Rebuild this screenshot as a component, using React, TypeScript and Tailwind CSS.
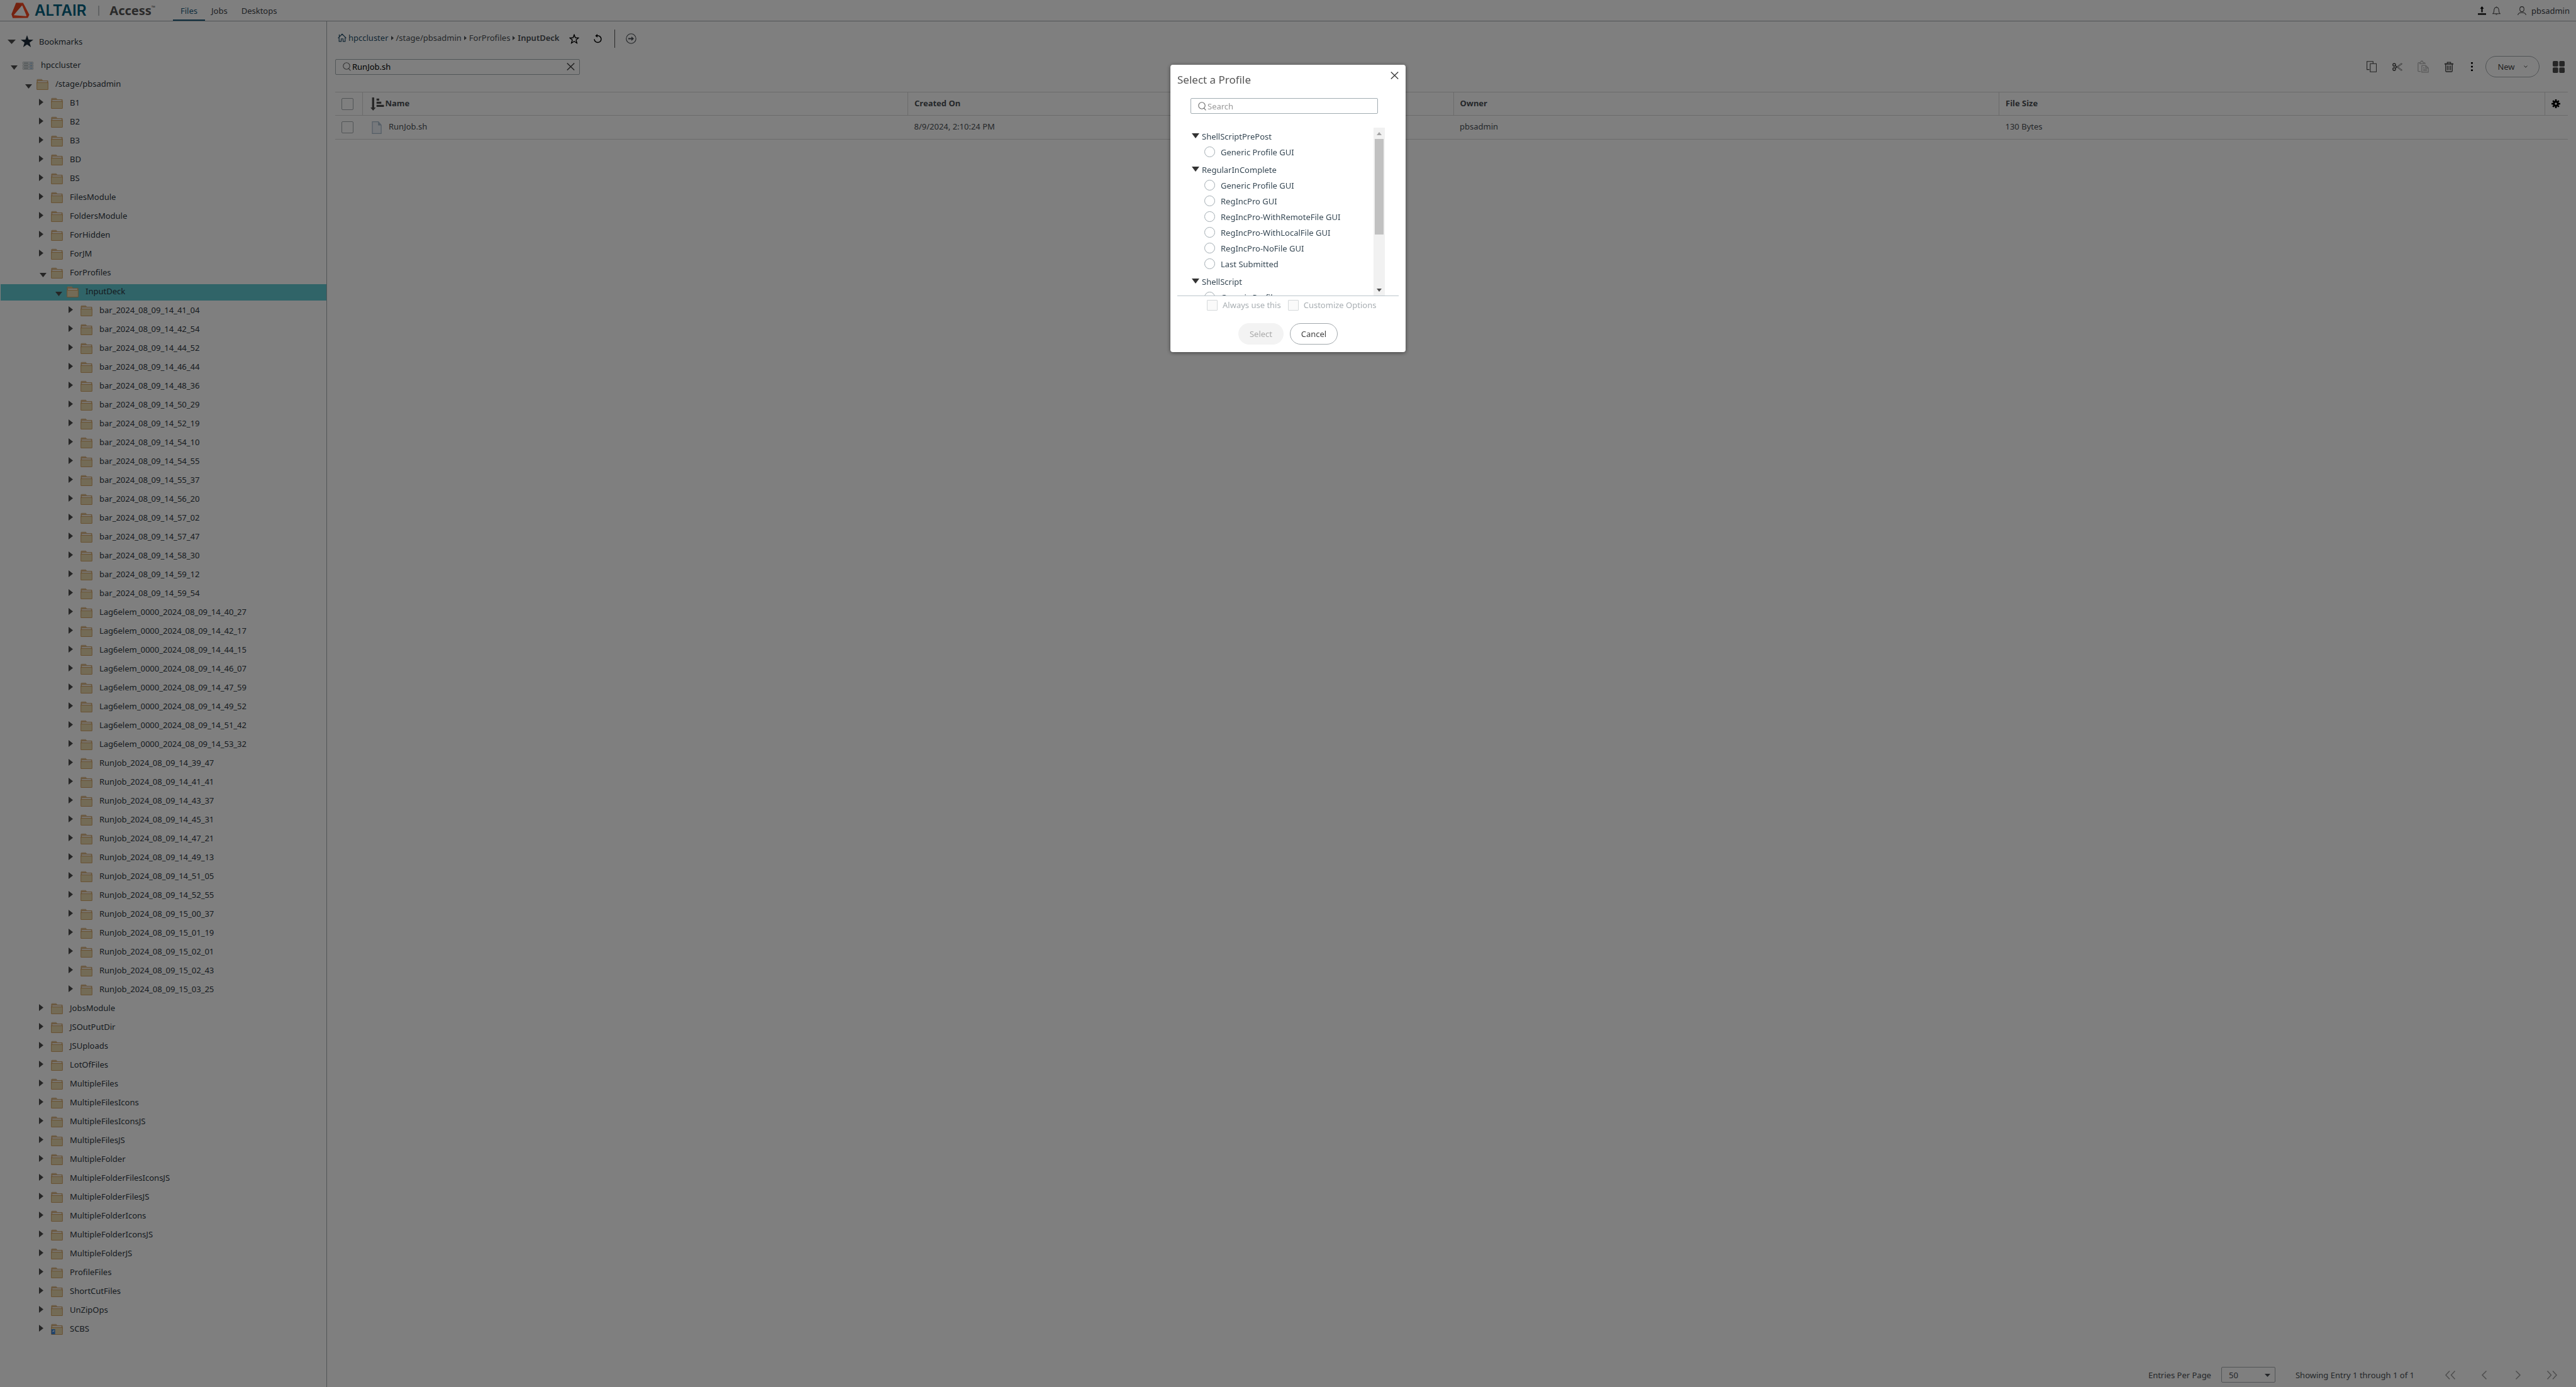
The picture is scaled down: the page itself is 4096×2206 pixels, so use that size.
import React from "react";

type Node = { name: string; level: number; open?: boolean; selected?: boolean; kind?: "server" | "link" };

const topFolders = ["B1", "B2", "B3", "BD", "BS", "FilesModule", "FoldersModule", "ForHidden", "ForJM"];

const runs: [string, string[]][] = [
  [
    "bar_2024_08_09_",
    ["14_41_04", "14_42_54", "14_44_52", "14_46_44", "14_48_36", "14_50_29", "14_52_19", "14_54_10", "14_54_55", "14_55_37", "14_56_20", "14_57_02", "14_57_47", "14_58_30", "14_59_12", "14_59_54"],
  ],
  ["Lag6elem_0000_2024_08_09_", ["14_40_27", "14_42_17", "14_44_15", "14_46_07", "14_47_59", "14_49_52", "14_51_42", "14_53_32"]],
  [
    "RunJob_2024_08_09_",
    ["14_39_47", "14_41_41", "14_43_37", "14_45_31", "14_47_21", "14_49_13", "14_51_05", "14_52_55", "15_00_37", "15_01_19", "15_02_01", "15_02_43", "15_03_25"],
  ],
];

const bottomFolders = [
  "JobsModule",
  "JSOutPutDir",
  "JSUploads",
  "LotOfFiles",
  "MultipleFiles",
  "MultipleFilesIcons",
  "MultipleFilesIconsJS",
  "MultipleFilesJS",
  "MultipleFolder",
  "MultipleFolderFilesIconsJS",
  "MultipleFolderFilesJS",
  "MultipleFolderIcons",
  "MultipleFolderIconsJS",
  "MultipleFolderJS",
  "ProfileFiles",
  "ShortCutFiles",
  "UnZipOps",
];

const tree: Node[] = [
  { name: "hpccluster", level: 0, open: true, kind: "server" },
  { name: "/stage/pbsadmin", level: 1, open: true },
  ...topFolders.map((name) => ({ name, level: 2 })),
  { name: "ForProfiles", level: 2, open: true },
  { name: "InputDeck", level: 3, open: true, selected: true },
  ...runs.flatMap(([prefix, times]) => times.map((t) => ({ name: prefix + t, level: 4 }))),
  ...bottomFolders.map((name) => ({ name, level: 2 })),
  { name: "SCBS", level: 2, kind: "link" as const },
];

const indent = ["pl-[16px]", "pl-[39px]", "pl-[62px]", "pl-[86px]", "pl-[109px]"];

const profiles: { group: string; items: string[] }[] = [
  { group: "ShellScriptPrePost", items: ["Generic Profile GUI"] },
  {
    group: "RegularInComplete",
    items: ["Generic Profile GUI", "RegIncPro GUI", "RegIncPro-WithRemoteFile GUI", "RegIncPro-WithLocalFile GUI", "RegIncPro-NoFile GUI", "Last Submitted"],
  },
  { group: "ShellScript", items: ["Generic Profile"] },
];

function FolderIcon({ link = false }: { link?: boolean }) {
  return (
    <svg className="w-[19px] h-[18px] shrink-0" viewBox="0 0 22 21" aria-hidden="true">
      <path d="M1 2h9l1.5 2H21v6H1z" fill="#d9b483" stroke="#cfa063" strokeWidth="1" />
      <path d="M1.500 .8h8.500v1.200h-8.500z" fill="#dcc7a6" />
      <path d="M2.500 4.800h17v3h-17z" fill="#f3efe8" />
      <path d="M.7 7.500h20.600V19.500q0 .9-.9.900H1.600q-.9 0-.9-.9z" fill="#e6d6ac" stroke="#d2a464" strokeWidth="1.200" />
      {link && (
        <>
          <path d="M.7 10.500h7v9.500h-7z" fill="#3f86d8" />
          <path d="M2.500 16.500q0-3 2.200-3.200V12l1.800 1.800-1.800 2v-1.200q-1.200 0-2.200 1.900z" fill="#fff" />
        </>
      )}
    </svg>
  );
}

function ServerIcon() {
  return (
    <svg className="w-[19px] h-[13px] shrink-0" viewBox="0 0 22 15" aria-hidden="true">
      {[0.7, 5.5, 10.300].map((y) => (
        <g key={y}>
          <rect x="1.500" y={y} width="19" height="4" rx=".8" fill="#f0f2f2" stroke="#b3bbbd" strokeWidth="1" />
          <path d={`M3.500 ${y + 2}h8`} stroke="#97a1a5" strokeWidth="1.300" />
          <path d={`M14.500 ${y + 2}h1.300M17.200 ${y + 2}h1.500`} stroke="#3f7fc0" strokeWidth="1.500" />
        </g>
      ))}
    </svg>
  );
}

function Down({ className = "w-[12px] h-[7px]" }: { className?: string }) {
  return (
    <svg className={className} viewBox="0 0 12 7" preserveAspectRatio="none" aria-hidden="true">
      <path d="M0 0h12L6 7z" fill="currentColor" />
    </svg>
  );
}

function RightTri({ className = "w-[7px] h-[11px]" }: { className?: string }) {
  return (
    <svg className={className} viewBox="0 0 7 11" preserveAspectRatio="none" aria-hidden="true">
      <path d="M0 0l7 5.500L0 11z" fill="currentColor" />
    </svg>
  );
}

function Magnifier({ className = "" }: { className?: string }) {
  return (
    <svg className={"w-[13px] h-[14px] shrink-0 " + className} viewBox="0 0 13 14" fill="none" stroke="currentColor" strokeWidth="1.100" aria-hidden="true">
      <circle cx="6" cy="6" r="5.200" />
      <path d="M9.200 9.800l3.200 3.600" />
    </svg>
  );
}

function Cross() {
  return (
    <svg className="w-[13px] h-[12px]" viewBox="0 0 13 12" fill="none" stroke="currentColor" strokeWidth="1.500" aria-hidden="true">
      <path d="M.8.5l11.400 11M12.200.5L.8 11.500" />
    </svg>
  );
}

function TreeRow({ node }: { node: Node }) {
  return (
    <li className={node.selected ? "pt-[3px] pb-[1px]" : ""}>
      <button
        type="button"
        className={
          "flex w-full items-center text-left " +
          indent[node.level] +
          (node.selected ? " ml-px h-[26px] bg-[#60c8d0] pb-[2px]" : " h-[30px]")
        }
      >
        <span className={"flex w-[19px] shrink-0 text-[#4d4d4d] " + (node.open ? "pl-[1px] pt-[6px]" : "pb-[3px]")}>
          {node.open ? <Down className="w-[11px] h-[7px]" /> : <RightTri />}
        </span>
        {node.kind === "server" ? <ServerIcon /> : <FolderIcon link={node.kind === "link"} />}
        <span className="pl-[11px] pb-[2px] whitespace-nowrap">{node.name}</span>
      </button>
    </li>
  );
}

function Header() {
  return (
    <header className="flex h-[34px] shrink-0 items-stretch border-b border-[#a2a8ac]">
      <a href="#home" className="flex items-center pl-[18px]" aria-label="Altair Access">
        <svg className="w-[29px] h-[25px]" viewBox="0 0 104 90" aria-hidden="true">
          <path
            fillRule="evenodd"
            fill="#f94a22"
            d="M27 2h40l10 18 26 50-9 18-86 1-7-22zM59 19L15 70q-2 3 2 3l66 5q5 0 3-4L63 19q-2-3-4 0z"
          />
          <path d="M27 2l13 0 21 12-47 58-5 17-8-22z" fill="#c63c1c" opacity=".35" />
        </svg>
        <span className="pl-[8px] font-[Inter] text-[24px] leading-[24px] font-semibold text-[#00607f]">ALTAIR</span>
        <span className="ml-[19px] h-[16px] w-[2px] bg-[#c2c6c8]" />
        <span className="flex items-start pl-[16px] text-[20px] leading-[24px] font-bold text-[#545454]">
          Access<span className="text-[8px] leading-[14px]">™</span>
        </span>
      </a>
      <nav className="ml-[28px] flex items-stretch">
        <a href="#files" className="flex items-center border-b-2 border-[#1e5c7c] px-[12px] pt-[2px] text-[#1e5c7c]">
          Files
        </a>
        <a href="#jobs" className="flex items-center pl-[10px] pr-[11px]">
          Jobs
        </a>
        <a href="#desktops" className="flex items-center pl-[11px]">
          Desktops
        </a>
      </nav>
      <div className="ml-auto flex items-center pr-[10px]">
        <button type="button" aria-label="Transfers">
          <svg className="w-[13px] h-[14px] text-black" viewBox="0 0 15 16" aria-hidden="true">
            <path d="M7.500 0L11 4.200H8.700V11H6.300V4.200H4zM0 13h15v2.600H0z" fill="currentColor" />
          </svg>
        </button>
        <button type="button" aria-label="Notifications" className="ml-[10px]">
          <svg className="w-[13px] h-[14px] text-[#444]" viewBox="0 0 15 16" fill="none" stroke="currentColor" strokeWidth="1.200" aria-hidden="true">
            <path d="M7.500.4v1.300M1 13.400h13c-1.400-1.200-2-2.800-2-5C12 4 10.400 1.800 7.500 1.800S3 4 3 8.400c0 2.200-.6 3.800-2 5z" />
            <path d="M6.200 14.300h2.600v1.200H6.200z" fill="currentColor" stroke="none" />
          </svg>
        </button>
        <button type="button" className="ml-[27px] flex items-center gap-[8px]">
          <svg className="w-[14px] h-[14px] text-[#444]" viewBox="0 0 16 16" fill="none" stroke="currentColor" strokeWidth="1.200" aria-hidden="true">
            <path d="M8 .7c2.200 0 3.800 1.700 3.800 4.300S10.200 9.800 8 9.800 4.200 7.600 4.200 5 5.800.7 8 .7zM.6 15.800C1.200 13 4 11.400 8 11.400s6.800 1.600 7.400 4.400" />
          </svg>
          <span>pbsadmin</span>
        </button>
      </div>
    </header>
  );
}

function Sidebar() {
  return (
    <aside className="w-[520px] shrink-0 overflow-hidden border-r border-[#a2a8ac] pt-[17px] text-[#2d3640]">
      <button type="button" className="mb-[8px] flex h-[30px] w-full items-center pl-[12px] text-left">
        <Down className="w-[13px] h-[7px] text-[#4d4d4d]" />
        <svg className="ml-[8px] w-[20px] h-[20px] text-[#1c2b38]" viewBox="0 0 22 22" aria-hidden="true">
          <path d="M11 0l2.700 7.700 8.300.2-6.600 5 2.400 8.100L11 16.200 4.200 21l2.400-8.100L0 7.900l8.300-.2z" fill="currentColor" />
        </svg>
        <span className="pl-[9px]">Bookmarks</span>
      </button>
      <ul>
        {tree.map((node) => (
          <TreeRow key={node.name} node={node} />
        ))}
      </ul>
    </aside>
  );
}

function Breadcrumb() {
  return (
    <div className="flex h-[29px] shrink-0 items-center pl-[4px] text-[#4a4f54]">
      <nav aria-label="Path" className="flex items-center pb-[3px]">
        <a href="#cluster" className="flex items-center gap-[3px] text-[#27506b]">
          <svg className="w-[14px] h-[14px]" viewBox="0 0 16 15" fill="none" stroke="currentColor" strokeWidth="1.400" aria-hidden="true">
            <path d="M.6 8.200L8 .9l7.400 7.300M2.500 6.800v7.400h3.800V9.500h3.400v4.700h3.800V6.800M2.800 5.500V1.500" />
          </svg>
          <span>hpccluster</span>
        </a>
        <RightTri className="mx-[4px] w-[4px] h-[7px]" />
        <a href="#stage">/stage/pbsadmin</a>
        <RightTri className="mx-[4px] w-[4px] h-[7px]" />
        <a href="#profiles">ForProfiles</a>
        <RightTri className="mx-[4px] w-[4px] h-[7px]" />
        <span className="font-semibold">InputDeck</span>
      </nav>
      <button type="button" aria-label="Bookmark" className="ml-[16px] text-black">
        <svg className="w-[16px] h-[16px]" viewBox="0 0 22 22" fill="none" stroke="currentColor" strokeWidth="1.900" aria-hidden="true">
          <path d="M11 1.800l2.500 6.500 7 .4-5.400 4.400 1.800 6.800L11 16.100 5.100 19.900l1.800-6.800L1.500 8.700l7-.4z" />
        </svg>
      </button>
      <button type="button" aria-label="Refresh" className="ml-[23px] text-black">
        <svg className="w-[13px] h-[15px]" viewBox="0 0 13 15" fill="none" stroke="currentColor" strokeWidth="1.500" aria-hidden="true">
          <path d="M1.100 8.200a5.400 5.400 0 1 0 5.400-5.400H4.500" />
          <path d="M6 0v5.800L2.400 2.900z" fill="currentColor" stroke="none" />
        </svg>
      </button>
      <span className="ml-[20px] h-[29px] w-px bg-[#555]" />
      <button type="button" aria-label="Go" className="ml-[17px]">
        <svg className="w-[17px] h-[17px]" viewBox="0 0 17 17" fill="none" stroke="currentColor" strokeWidth="1.100" aria-hidden="true">
          <circle cx="8.500" cy="8.500" r="7.700" />
          <path d="M4 8.500h7" strokeWidth="2" />
          <path d="M9 5l4 3.500L9 12z" fill="currentColor" stroke="none" />
        </svg>
      </button>
    </div>
  );
}

function Toolbar() {
  const cell = "flex h-[34px] w-[41px] items-center justify-center";
  return (
    <div className="mt-[13px] flex h-[34px] shrink-0 items-center pr-[5px] text-[#444]">
      <label className="flex h-[25px] w-[389px] items-center rounded-[2px] border border-[#a2acb0] pl-[11px] pr-[7px]">
        <Magnifier className="text-[#666]" />
        <input type="text" aria-label="Filter files" defaultValue="RunJob.sh" className="min-w-0 flex-1 bg-transparent pl-[2px] text-black outline-none" />
        <button type="button" aria-label="Clear">
          <Cross />
        </button>
      </label>
      <div className="ml-auto flex items-center">
        <button type="button" aria-label="Copy" className={cell}>
          <svg className="w-[16px] h-[18px]" viewBox="0 0 18 20" fill="none" stroke="currentColor" strokeWidth="1.200" aria-hidden="true">
            <path d="M6.500 4.700h11v14.500h-11zM11.600 4V.7H.7v14.500H5" />
          </svg>
        </button>
        <button type="button" aria-label="Cut" className={cell}>
          <svg className="w-[16px] h-[13px]" viewBox="0 0 18 14" fill="none" stroke="currentColor" aria-hidden="true">
            <circle cx="3.300" cy="3.200" r="2.400" strokeWidth="1.500" />
            <circle cx="3.300" cy="10.800" r="2.400" strokeWidth="1.500" />
            <path d="M5.200 4.700L8.400 7l-3.200 2.300" strokeWidth="1.500" />
            <path d="M8.400 6.400L15.500.8q1.800-.3 2 .8L10 7l7.500 5.400q-.2 1.100-2 .8L8.400 7.600" strokeWidth=".8" />
          </svg>
        </button>
        <button type="button" disabled aria-label="Paste" className={cell + " text-[#b4b4b4]"}>
          <svg className="w-[18px] h-[20px]" viewBox="0 0 21 23" fill="none" stroke="currentColor" strokeWidth="1.500" aria-hidden="true">
            <path d="M6 20.500H2.500q-1.500 0-1.500-1.500V5.500Q1 4 2.500 4H4M12.500 4q1.500 0 1.500 1.500V7" />
            <path d="M4.500 6.200V4q1.500-.2 1.700-1.600Q6.800.8 8.300 1q1.300.2 1.400 1.600.3 1.300 2 1.400v2.200z" />
            <path d="M8 9.500h7.500l4.500 4.300v8H8zM15.300 9.800v4.200H20M10.500 13.500h2.500M10.500 16.300h7M10.500 19h7" />
          </svg>
        </button>
        <button type="button" aria-label="Delete" className={cell}>
          <svg className="w-[14px] h-[17px]" viewBox="0 0 16 19" fill="none" stroke="currentColor" strokeWidth="1.500" aria-hidden="true">
            <path d="M0 4h16" strokeWidth="2.200" />
            <path d="M5 3V1h6v2M2 5v11.500q0 1.600 1.600 1.600h8.800q1.600 0 1.600-1.600V5M5 7v8.500M8 7v8.500M11 7v8.500" />
          </svg>
        </button>
        <button type="button" aria-label="More" className="flex h-[34px] w-[32px] items-center justify-center text-black">
          <svg className="w-[3px] h-[14px]" viewBox="0 0 3 14" aria-hidden="true">
            <path d="M0 0h3v2.500H0zM0 5.700h3v2.500H0zM0 11.400h3v2.500H0z" fill="currentColor" />
          </svg>
        </button>
        <button type="button" className="ml-[6px] flex h-[34px] w-[86px] items-center justify-center gap-[14px] rounded-full border border-[#a2a8ac] pb-px">
          New
          <svg className="w-[6px] h-[4px]" viewBox="0 0 6 4" fill="none" stroke="currentColor" aria-hidden="true">
            <path d="M.4.500L3 3.200 5.600.5" />
          </svg>
        </button>
        <button type="button" aria-label="Grid view" className="ml-[21px]">
          <svg className="w-[19px] h-[19px]" viewBox="0 0 22 22" fill="#4d4d4d" aria-hidden="true">
            <rect width="10" height="10" rx="2" />
            <rect x="12" width="10" height="10" rx="2" />
            <rect y="12" width="10" height="10" rx="2" />
            <rect x="12" y="12" width="10" height="10" rx="2" />
          </svg>
        </button>
      </div>
    </div>
  );
}

function FileTable() {
  const box = "block h-[19px] w-[19px] appearance-none rounded-[2px] border border-[#a2a8ac]";
  const th = "border-l border-[#d6d6d6] p-0 text-left font-bold";
  return (
    <table className="mt-[23px] w-full table-fixed border-y border-[#d6d6d6] text-[#4a4f54]">
      <colgroup>
        <col className="w-[43px]" />
        <col />
        <col />
        <col />
        <col />
        <col className="w-[37px]" />
      </colgroup>
      <thead>
        <tr className="h-[37px] border-b border-[#d6d6d6]">
          <th className="p-0 pl-[10px]">
            <input type="checkbox" aria-label="Select all" className={box} />
          </th>
          <th className={th}>
            <span className="flex items-center pl-[12px]">
              <svg className="w-[22px] h-[21px] text-[#4d4d4d]" viewBox="0 0 26 25" fill="currentColor" aria-hidden="true">
                <path d="M3 0h4v19h3l-5 6-5-6h3zM11.500 2h5v4h-5zM11.500 8h9v4h-9zM11.500 14h14v4h-14z" />
              </svg>
              <span className="pl-[2px] pb-[2px]">Name</span>
            </span>
          </th>
          <th className={th + " pl-[10px] pb-[2px]"}>Created On</th>
          <th className={th + " pl-[10px] pb-[2px]"}>Owner</th>
          <th className={th + " pl-[10px] pb-[2px]"}>File Size</th>
          <th className={th + " pl-[10px]"}>
            <button type="button" aria-label="Column settings" className="block text-black">
              <svg className="w-[14px] h-[14px]" viewBox="0 0 16 16" aria-hidden="true">
                <g stroke="currentColor" strokeWidth="3">
                  <path d="M8 0v16M0 8h16M2.500 2.500l11 11M13.500 2.500l-11 11" />
                </g>
                <circle cx="8" cy="8" r="5.500" fill="currentColor" />
                <circle cx="8" cy="8" r="2" fill="#fff" />
              </svg>
            </button>
          </th>
        </tr>
      </thead>
      <tbody>
        <tr className="h-[38px]">
          <td className="p-0 pl-[10px]">
            <input type="checkbox" aria-label="Select RunJob.sh" className={box} />
          </td>
          <td className="p-0">
            <span className="flex items-center pl-[15px]">
              <svg className="w-[16px] h-[20px]" viewBox="0 0 18 23" aria-hidden="true">
                <path d="M1 .8h11L17.200 7v15.200H1z" fill="#eef3f8" stroke="#a9bccd" strokeWidth="1.400" />
                <path d="M11.500.8V7.500h5.700z" fill="#a9bccd" />
              </svg>
              <span className="pl-[11px] pb-[4px]">RunJob.sh</span>
            </span>
          </td>
          <td className="p-0 pl-[10px] pb-[4px]">8/9/2024, 2:10:24 PM</td>
          <td className="p-0 pl-[10px] pb-[4px]">pbsadmin</td>
          <td className="p-0 pl-[10px] pb-[4px]">130 Bytes</td>
          <td className="p-0" />
        </tr>
      </tbody>
    </table>
  );
}

function PageArrow({ label, paths }: { label: string; paths: string[] }) {
  return (
    <button type="button" disabled aria-label={label} className="flex w-[54px] items-center justify-center text-[#9c9c9c]">
      <svg className="w-[18px] h-[14px]" viewBox="0 0 18 14" fill="none" stroke="currentColor" strokeWidth="1.500" aria-hidden="true">
        {paths.map((d) => (
          <path key={d} d={d} />
        ))}
      </svg>
    </button>
  );
}

function Footer() {
  return (
    <footer className="-mr-[2px] mt-auto flex items-center justify-end pb-[7px] text-[#4a4f54]">
      <label htmlFor="page-size">Entries Per Page</label>
      <span className="relative ml-[16px] flex">
        <select id="page-size" defaultValue="50" className="h-[25px] w-[86px] appearance-none rounded-[2px] border border-[#a2a8ac] bg-transparent pl-[11px]">
          <option>50</option>
          <option>100</option>
        </select>
        <Down className="pointer-events-none absolute right-[8px] top-[11px] w-[9px] h-[5px]" />
      </span>
      <span className="ml-[32px] mr-[30px]">Showing Entry 1 through 1 of 1</span>
      <PageArrow label="First page" paths={["M8 .5L2 7l6 6.500", "M16.500.5l-6 6.500 6 6.500"]} />
      <PageArrow label="Previous page" paths={["M12.500.5L6 7l6.500 6.500"]} />
      <PageArrow label="Next page" paths={["M5.500.5L12 7l-6.500 6.500"]} />
      <PageArrow label="Last page" paths={["M1.500.5l6 6.500-6 6.500", "M10 .5l6 6.500-6 6.500"]} />
    </footer>
  );
}

function ProfileDialog() {
  const box = "h-[17px] w-[17px] appearance-none rounded-[1px] border border-[#d5d9da] bg-[#fafafa]";
  return (
    <div className="fixed inset-0 flex items-start justify-center bg-black/50 pt-[103px]">
      <div role="dialog" aria-modal="true" aria-labelledby="dialog-title" className="w-[374px] rounded-[4px] bg-white px-[11px] pb-[12px] text-[#384955] shadow-[0_1px_6px_rgba(0,0,0,0.5)]">
        <div className="flex h-[53px] items-start justify-between">
          <h2 id="dialog-title" className="pt-[13px] text-[17px] leading-[22px] text-[#555]">
            Select a Profile
          </h2>
          <button type="button" aria-label="Close" className="pt-[11px] text-[#444]">
            <Cross />
          </button>
        </div>
        <label className="mr-[33px] ml-[21px] flex h-[25px] items-center rounded-[2px] border border-[#a2acb2] pl-[11px] text-[#666]">
          <Magnifier />
          <input type="text" placeholder="Search" aria-label="Search profiles" className="min-w-0 flex-1 bg-transparent pl-[2px] outline-none placeholder:text-[#999]" />
        </label>
        <div className="mt-[22px] flex h-[268px] border-b border-[#bcc5cb] pr-[22px] pl-[23px]">
          <div className="min-w-0 flex-1 overflow-hidden pt-[2px]">
            {profiles.map(({ group, items }) => (
              <fieldset key={group} className="mb-[4px]">
                <legend className="block">
                  <button type="button" className="flex h-[24px] items-center gap-[4px]">
                    <Down className="mb-[2px] w-[12px] h-[8px] text-[#333]" />
                    {group}
                  </button>
                </legend>
                {items.map((item) => (
                  <label key={item} className="flex h-[25px] items-center gap-[9px] pl-[20px]">
                    <input type="radio" name="profile" className="h-[17px] w-[17px] appearance-none rounded-full border border-[#a2acb2]" />
                    <span className="whitespace-nowrap">{item}</span>
                  </label>
                ))}
              </fieldset>
            ))}
          </div>
          <div aria-hidden="true" className="flex w-[18px] flex-col items-center bg-[#f1f1f1]">
            <span className="flex h-[18px] items-center text-[#a3a3a3]">
              <Down className="w-[8px] h-[5px] rotate-180" />
            </span>
            <span className="h-[152px] w-[14px] bg-[#c1c1c1]" />
            <span className="mt-auto flex h-[18px] items-center text-[#505050]">
              <Down className="w-[8px] h-[5px]" />
            </span>
          </div>
        </div>
        <div className="mt-[5px] mb-px ml-[47px] flex h-[18px] items-center text-[#a9afb3]">
          <label className="flex items-center gap-[8px]">
            <input type="checkbox" disabled className={box} />
            <span>Always use this</span>
          </label>
          <label className="ml-[11px] flex items-center gap-[8px]">
            <input type="checkbox" disabled className={box} />
            <span>Customize Options</span>
          </label>
        </div>
        <div className="mt-[20px] flex justify-center gap-[10px]">
          <button type="button" disabled className="h-[34px] w-[72px] rounded-full bg-[#f3f3f3] text-[#aaa]">
            Select
          </button>
          <button type="button" className="h-[34px] w-[76px] rounded-full border border-[#a2a8ac] text-[#444]">
            Cancel
          </button>
        </div>
      </div>
    </div>
  );
}

export default function App() {
  return (
    <div className="flex h-screen flex-col overflow-hidden bg-white font-['Noto_Sans',sans-serif] text-[13px] leading-[18px] text-[#3c4248]">
      <Header />
      <div className="flex min-h-0 flex-1">
        <Sidebar />
        <main className="flex min-w-0 flex-1 flex-col pr-[13px] pl-[13px] pt-[13px]">
          <Breadcrumb />
          <Toolbar />
          <FileTable />
          <Footer />
        </main>
      </div>
      <ProfileDialog />
    </div>
  );
}
